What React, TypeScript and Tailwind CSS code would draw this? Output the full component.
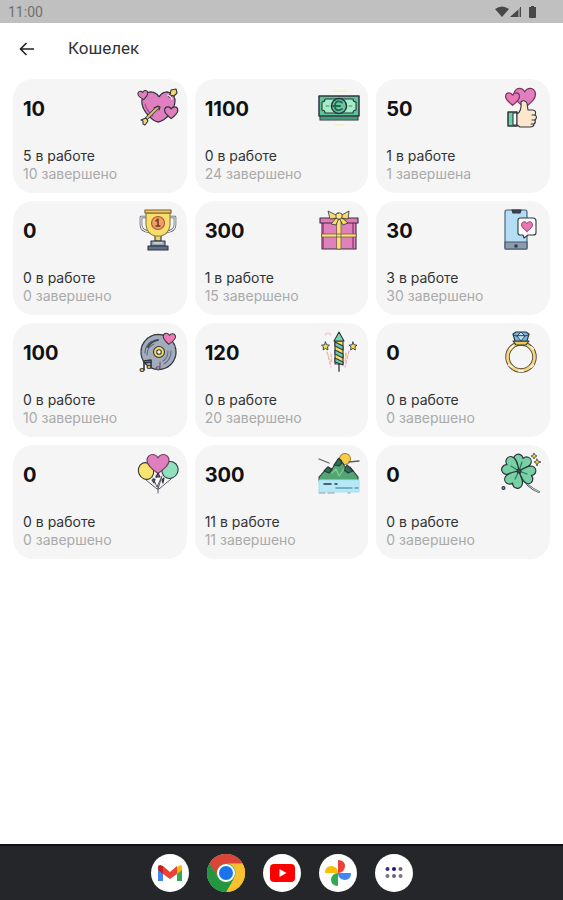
import type { ReactNode } from 'react';

const HEART =
  'M12 21C5 15.500 1 12 1 7.500C1 4 3.500 1.500 6.500 1.500C9 1.500 11 3 12 5C13 3 15 1.500 17.500 1.500C20.500 1.500 23 4 23 7.500C23 12 19 15.500 12 21Z';

interface IconProps {
  children: ReactNode;
}

function Icon({ children }: IconProps) {
  return (
    <svg
      viewBox="0 0 42 42"
      className="size-[42px] shrink-0"
      fill="none"
      stroke="#30353d"
      strokeWidth="1.1"
      strokeLinejoin="round"
      strokeLinecap="round"
      aria-hidden="true"
    >
      {children}
    </svg>
  );
}

function ArrowHeartIcon() {
  return (
    <Icon>
      <path
        d="M21 35q-4-1-7-4Q4 22 5 13q2-8 9-8 5 0 8 5 3-5 8-5 7 1 8 8 0 9-8 17-4 4-9 5z"
        fill="#e07fc0"
        strokeWidth="1.300"
        strokeDasharray="3 1"
      />
      <path d="M8 17q2 7 8 12" stroke="#a8497f" />
      <path d={HEART} fill="#e07fc0" transform="translate(0 4) rotate(-8) scale(.45)" strokeWidth="2.300" />
      <path d={HEART} fill="#e07fc0" transform="translate(27 19) scale(.6)" strokeWidth="2" />
      <path d="M8 33L20 21M33 9l3-3" stroke="#30353d" strokeWidth="3.500" />
      <path d="M8 33L20 21M33 9l3-3" stroke="#e0bd5c" strokeWidth="2" />
      <path d="M4 33l5-2 2 3-3 4-2-1v-3z" fill="#f5d86b" />
      <path d="M34 3l5-1 1 4-3 3-4-1z" fill="#f5d86b" />
      <path d="M17 21l4-2 2 1-1 3" />
      <path d="M31 8q3 1 4 4" stroke="#fff" strokeWidth="1.300" />
    </Icon>
  );
}

function CashIcon() {
  return (
    <Icon>
      <path d="M16 4h12M17 38h9" stroke="#f4ef9b" />
      <path d="M2 28h38v5H2z" fill="#5fc39a" />
      <path d="M1 9h40v20H1z" fill="#5fc39a" strokeWidth="1.500" />
      <path d="M7 12h28q0 3 3 3v8q-3 0-3 3H7q0-3-3-3v-8q3 0 3-3z" fill="#a5edc7" />
      <circle cx="21" cy="19" r="7.500" fill="#64c99e" strokeWidth="1.500" />
      <path d="M24 15.500q-5-3-7 1.500v4q2 4 7 1M15 19h7" stroke="#25664f" strokeWidth="1.800" />
      <path d="M8 19h3M31 19h3" stroke="#3f8f70" />
      <path d="M3 31h36" stroke="#2c765c" />
    </Icon>
  );
}

function ThumbIcon() {
  return (
    <Icon>
      <path d={HEART} fill="#e07fc0" transform="translate(13 0) scale(.98)" stroke="#7e345b" strokeWidth="1.300" />
      <path d={HEART} fill="#e879b7" transform="translate(5 5) scale(.63)" stroke="#7e345b" strokeWidth="2" />
      <path d="M8 25h9v14H8z" fill="#69d3a6" strokeWidth="1.500" />
      <path d="M13 26h4v12h-4z" fill="#fff" />
      <path
        d="M17 27q5-3 4-12q3-3 6 1l1 7h5q4 1 2 5q3 2 0 5q1 3-1 4q0 3-4 3H20l-3-2z"
        fill="#fae7cc"
      />
      <path d="M32 28h3M32 33h3M31 37h3" />
    </Icon>
  );
}

function TrophyIcon() {
  return (
    <Icon>
      <path d="M9 8H4v8q0 6 9 7M32 8h6v8q0 6-9 7" stroke="#555d67" strokeWidth="2.600" />
      <path d="M9 8H4v8q0 6 9 7M32 8h6v8q0 6-9 7" stroke="#eceef1" strokeWidth="1.200" />
      <path d="M18 24h6v8h-6z" fill="#f2d569" />
      <path d="M9 4h24v12q-1 9-9 11h-6q-8-2-9-11z" fill="#f8df6d" stroke="#8e793c" />
      <path d="M8 1h26v3H8z" fill="#f5c95d" stroke="#775c31" />
      <circle cx="21" cy="14" r="6.500" fill="#f39d62" stroke="#a75a39" />
      <path d="M19 12l2-2v7M19 17h4" stroke="#693b2d" strokeWidth="1.500" />
      <path d="M14 32h14v5H14z" fill="#93a2b7" />
      <path d="M11 37h20v4H11z" fill="#627087" />
      <path d="M17 34h8" stroke="#edf3fa" />
    </Icon>
  );
}

function GiftIcon() {
  return (
    <Icon>
      <path d="M4 13h34v27H4z" fill="#df82bc" />
      <path d="M5 14v25M35 14v25" stroke="#a33e79" strokeWidth="1.500" />
      <path d="M2 9h38v5H2z" fill="#e679b9" />
      <path d="M19 10h4v30h-4zM4 25h34v3H4z" fill="#fbe27b" stroke="#77583e" strokeWidth=".8" />
      <path d="M20 7L10 2l2 8 8-1zM22 7l9-5-1 8-8-1zM19 8l-6 7 5 1 3-7 4 7 5-2-7-6z" fill="#f8dc67" strokeWidth=".8" />
      <rect x="18" y="4" width="6" height="6" rx="2" fill="#ffe688" strokeWidth=".8" />
    </Icon>
  );
}

function PhoneIcon() {
  return (
    <Icon>
      <rect x="5" y="1" width="22" height="39" rx="2" fill="#b3dcf5" stroke="#44576c" />
      <path d="M12 1h9l-1 3h-7z" fill="#34495d" />
      <path d="M5 33h22v7H5z" fill="#8a9bae" stroke="#44576c" />
      <path d="M15 36h2v2h-2z" fill="#34495d" />
      <path d="M20 9h13q3 0 3 3v12q0 2-3 2h-5l-4 3-1-3h-3q-2 0-2-2V11q0-2 2-2z" fill="#fcfcfc" />
      <path d={HEART} fill="#ea75b1" transform="translate(21 12) scale(.5)" stroke="#923e70" strokeWidth="2" />
    </Icon>
  );
}

function VinylIcon() {
  return (
    <Icon>
      <circle cx="21.500" cy="21" r="17.500" fill="#a3acbd" strokeDasharray="3 1" strokeWidth="1.300" />
      <path d="M8 22q0-8 7-12M10 24q0-8 7-11M34 20q0 9-7 13M31 20q0 7-5 10" stroke="#626b7c" />
      <path d="M11 16q3-6 10-7" stroke="#404855" strokeWidth="2" />
      <circle cx="22" cy="21" r="5.500" fill="#f6da60" />
      <circle cx="22" cy="21" r="2.300" fill="#fff" />
      <path d={HEART} fill="#ee79b5" transform="translate(26 1) rotate(5) scale(.56)" strokeWidth="1.800" />
      <path d="M7 39V30l7-1v7M7 32l7-1" strokeWidth="1.600" />
      <ellipse cx="5" cy="39" rx="2" ry="1.500" fill="#f4cf48" />
      <ellipse cx="12" cy="36" rx="2" ry="1.500" fill="#f4cf48" />
      <path d="M23 31v5q-4-1-4 2 4 2 4-2" stroke="#7d496b" />
    </Icon>
  );
}

function FireworkIcon() {
  const star = 'M0-5L1.500-1.500 5-1 2.500 1 3 5 0 3-3 5-2.500 1-5-1-1.500-1.500Z';

  return (
    <Icon>
      <path d="M7 4q3-4 6 0" stroke="#edb5d8" />
      <path d="M9 21l4 15M13 23l1 9M31 20l-4 16M28 22l-1 9" stroke="#eb9fca" strokeDasharray="3 2" />
      <path d="M10 23l3 9M29 23l-2 8" stroke="#f5db63" strokeDasharray="3 2" />
      <path d="M21 31v9" stroke="#777" strokeWidth="2" />
      <path d="M17 10h8v23h-8z" fill="#f8df62" />
      <path d="M17 11l8 4v4l-8-4zM17 19l8 4v4l-8-4zM17 27l8 4v3l-8-3z" fill="#6fcdae" />
      <path d="M21 1l5 9H16z" fill="#77d5b1" />
      <path d={star} fill="#f8dc55" transform="translate(7.500 15) scale(.8)" />
      <path d={star} fill="#f8dc55" transform="translate(35 15) scale(.8)" />
    </Icon>
  );
}

function RingIcon() {
  return (
    <Icon>
      <circle cx="21" cy="26" r="13.500" stroke="#4f473b" strokeWidth="4.500" />
      <circle cx="21" cy="26" r="13.500" stroke="#f5d47d" strokeWidth="2.700" />
      <path d="M10 18l3-3M9 34l3 2M31 16l2 2M31 36l2-2M19 40h4" stroke="#fff4c7" strokeWidth="2" />
      <path d="M13 10h16l-3 4H16z" fill="#eacb48" />
      <path d="M13 3l3-2h10l3 2-2 7H15z" fill="#73b9e4" />
      <path d="M13 4l4 1 4-4 4 4 4-1M17 5l4 5 4-5z" fill="#bce7fb" strokeWidth=".9" />
    </Icon>
  );
}

function BalloonsIcon() {
  return (
    <Icon>
      <path d="M9 27l11 9M34 26L22 36M19 23l2 11v6M25 23l-4 13" strokeWidth=".8" />
      <path d="M16 25l4 9 4-9" fill="#fff" strokeWidth=".8" />
      <ellipse cx="9" cy="18" rx="7.500" ry="8.500" fill="#f8e46f" transform="rotate(-25 9 18)" />
      <ellipse cx="33" cy="17" rx="8" ry="8.500" fill="#91e1bd" transform="rotate(25 33 17)" />
      <path d={HEART} fill="#df7fc0" transform="translate(9 0) scale(1 .98)" stroke="#70415f" strokeWidth="1.200" />
      <path d="M21 20l-2 4h4zM15 27l2 3 1-4zM25 27l1 3 1-5z" fill="#c84482" />
    </Icon>
  );
}

function MountainIcon() {
  return (
    <Icon>
      <circle cx="27" cy="6" r="5.500" fill="#f8cb48" stroke="#a6863d" />
      <path d="M1 6l10 4M31 9l10-1" stroke="#59616a" strokeWidth="1.300" />
      <path d="M1 24l9-10 4 2 6-10 3 1 6 10 3-3 8 10v4H1z" fill="#52a674" strokeDasharray="3 1" />
      <path d="M6 18l4-4 4 3-3 3zM16 12l5-7 3 5-3 3zM26 17l3-5 6 6-5 2z" fill="#247451" />
      <path d="M14 20l4-4 3 7 5-7" stroke="#85cf91" />
      <path d="M1 27h40v12H1z" fill="#b5e9f7" stroke="#a6deed" />
      <path d="M6 31h7M17 31h2" strokeWidth="1.500" />
      <path d="M18 35h16M37 35h3" stroke="#629caf" strokeWidth="1.500" />
      <path d="M1 40h6M10 40h6M30 40h2" stroke="#929da2" />
    </Icon>
  );
}

function CloverIcon() {
  return (
    <Icon>
      <path d="M20 20q6 14 19 19" stroke="#4c555b" strokeWidth="2" />
      <path d="M20 20q6 14 19 19" stroke="#f5fff9" strokeWidth=".8" />
      <g fill="#77d1a4" strokeWidth="1.400">
        <path d={HEART} transform="translate(19 18) rotate(18) scale(.82) translate(-12 -21)" />
        <path d={HEART} transform="translate(19 18) rotate(-62) scale(.85) translate(-12 -21)" />
        <path d={HEART} transform="translate(19 18) rotate(-152) scale(.85) translate(-12 -21)" />
        <path d={HEART} transform="translate(19 18) rotate(110) scale(.82) translate(-12 -21)" />
      </g>
      <path d="M19 18l-8-5M19 18l3-9M19 18l8 3M19 18l-4 8" stroke="#2d7659" strokeWidth="1.200" />
      <circle cx="19" cy="18" r="2" fill="#304f43" />
      <path d="M34 0l1 2 2 1-2 1-1 2-1-2-2-1 2-1zM37 6l1 2 3 1-3 1-1 3-1-3-2-1 2-1z" fill="#f4cb42" strokeWidth=".7" />
      <circle cx="3.500" cy="35" r="1.500" fill="#7d8498" />
    </Icon>
  );
}

const gifts = [
  { total: 10, active: 5, done: '10 завершено', icon: <ArrowHeartIcon /> },
  { total: 1100, active: 0, done: '24 завершено', icon: <CashIcon /> },
  { total: 50, active: 1, done: '1 завершена', icon: <ThumbIcon /> },
  { total: 0, active: 0, done: '0 завершено', icon: <TrophyIcon /> },
  { total: 300, active: 1, done: '15 завершено', icon: <GiftIcon /> },
  { total: 30, active: 3, done: '30 завершено', icon: <PhoneIcon /> },
  { total: 100, active: 0, done: '10 завершено', icon: <VinylIcon /> },
  { total: 120, active: 0, done: '20 завершено', icon: <FireworkIcon /> },
  { total: 0, active: 0, done: '0 завершено', icon: <RingIcon /> },
  { total: 0, active: 0, done: '0 завершено', icon: <BalloonsIcon /> },
  { total: 300, active: 11, done: '11 завершено', icon: <MountainIcon /> },
  { total: 0, active: 0, done: '0 завершено', icon: <CloverIcon /> },
];

function StatusBar() {
  return (
    <div className="flex h-[23px] items-center justify-between bg-[#c0c0c0] pl-2 pr-6 text-[#707070]">
      <span className="font-['Roboto',sans-serif] text-sm">11:00</span>
      <svg viewBox="0 0 44 14" className="h-[14px] w-[44px]" fill="#484848" aria-hidden="true">
        <path d="M0 4q7-5 14 0l-7 8z" />
        <path d="M26 2v10H15z" fill="#8b8b8b" />
        <path d="M23 5v7h-8zM25 2h1v10h-1z" />
        <path d="M34 2h2V1h3v1h2v10q0 1-1 1h-5q-1 0-1-1z" />
      </svg>
    </div>
  );
}

const apps = [
  {
    name: 'Gmail',
    logo: (
      <>
        <path d="M7 12v15h5V17z" fill="#4285f4" />
        <path d="M26 17v10h5V12z" fill="#34a853" />
        <path d="M26 13l3-2q2 0 2 2v3l-5 4z" fill="#fbbc04" />
        <path d="M7 13q0-2 2-2l3 1v8l-5-4z" fill="#c5221f" />
        <path d="M12 12l7 6 7-6v8l-7 5-7-5z" fill="#ea4335" />
      </>
    ),
  },
  {
    name: 'Chrome',
    logo: (
      <>
        <circle cx="19" cy="19" r="19" fill="#34a853" />
        <path d="M2.500 9.500A19 19 0 0 1 35.500 9.500H19A9.500 9.500 0 0 0 10.800 23.750Z" fill="#dc4437" />
        <path d="M35.500 9.500A19 19 0 0 1 19 38L27.200 23.750A9.500 9.500 0 0 0 19 9.500Z" fill="#fbc02d" />
        <path d="M2.500 9.500A19 19 0 0 0 19 38l8.200-14.250A9.500 9.500 0 0 1 10.800 23.750z" fill="#24963f" />
        <circle cx="19" cy="19" r="9" fill="#fff" />
        <circle cx="19" cy="19" r="7" fill="#1a73e8" />
      </>
    ),
  },
  {
    name: 'YouTube',
    logo: (
      <>
        <rect x="7" y="10" width="25" height="18" rx="4" fill="#f00" />
        <path d="M16.500 15l7 4-7 4z" fill="#fff" />
      </>
    ),
  },
  {
    name: 'Google Photos',
    logo: (
      <>
        <path d="M19 6q7 0 7 6.500-1 6.500-7 6.500z" fill="#ea4335" />
        <path d="M32 19q0 7-6.500 7-6.500-1-6.500-7z" fill="#4285f4" />
        <path d="M19 32q-7 0-7-6.500 1-6.500 7-6.500z" fill="#34a853" />
        <path d="M6 19q0-7 6.500-7 6.500 1 6.500 7z" fill="#fbbc04" />
      </>
    ),
  },
  {
    name: 'Все приложения',
    logo: (
      <>
        <circle cx="12.500" cy="15" r="2" fill="#343084" />
        <circle cx="19" cy="15" r="2" fill="#171886" />
        <circle cx="25.500" cy="15" r="2" fill="#775f78" />
        <circle cx="12.500" cy="22" r="2" fill="#777684" />
        <circle cx="19" cy="22" r="2" fill="#686779" />
        <circle cx="25.500" cy="22" r="2" fill="#777684" />
      </>
    ),
  },
];

function Dock() {
  return (
    <nav className="flex h-14 items-center justify-center gap-[18px] border-t-2 border-[#111216] bg-[#252629]">
      {apps.map((app) => (
        <button key={app.name} type="button" aria-label={app.name} className="size-[38px] rounded-full bg-white">
          <svg viewBox="0 0 38 38" className="size-full" aria-hidden="true">
            {app.logo}
          </svg>
        </button>
      ))}
    </nav>
  );
}

export default function App() {
  return (
    <div className="flex min-h-screen flex-col bg-white font-['Inter',sans-serif] text-[#111]">
      <StatusBar />

      <header className="flex h-14 items-center gap-8 px-[18px] pb-1">
        <button type="button" aria-label="Назад">
          <svg
            viewBox="0 0 18 18"
            className="size-[18px]"
            fill="none"
            stroke="#222"
            strokeWidth="1.600"
            aria-hidden="true"
          >
            <path d="M16 9H2.500M8.500 3l-6 6 6 6" />
          </svg>
        </button>
        <h1 className="font-['Roboto',sans-serif] text-[17px] text-[#333]">Кошелек</h1>
      </header>

      <main className="flex-1 px-[13px] pb-6">
        <ul className="grid grid-cols-3 gap-2">
          {gifts.map((gift, index) => (
            <li key={index} className="flex min-h-[114px] justify-between rounded-[20px] bg-[#f5f5f5] p-2">
              <div className="flex flex-col justify-between pb-[2px] pl-[2px] pt-2">
                <p className="text-xl font-bold">{gift.total}</p>
                <div className="whitespace-nowrap text-sm leading-[18px]">
                  <p className="text-[#333]">{gift.active} в работе</p>
                  <p className="text-[#aaa]">{gift.done}</p>
                </div>
              </div>
              <div className="-ml-12">{gift.icon}</div>
            </li>
          ))}
        </ul>
      </main>

      <Dock />
    </div>
  );
}
